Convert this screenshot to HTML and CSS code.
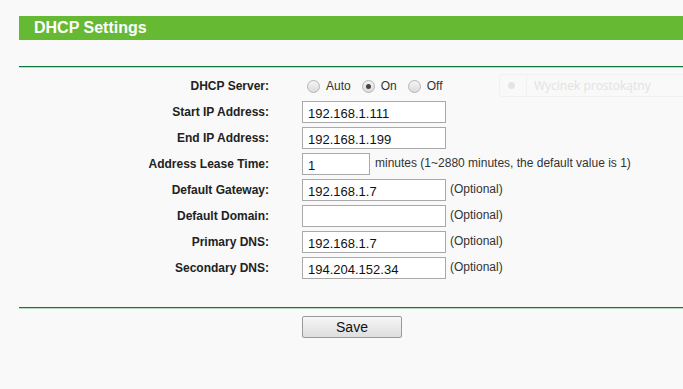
FILE: index.html
```html
<!DOCTYPE html>
<html lang="en">
<head>
    <meta charset="UTF-8">
    <title>DHCP Settings</title>
    <link rel="stylesheet" href="styles.css">
</head>
<body>
    <div class="page">
        <div class="title-bar">DHCP Settings</div>
        <div class="rule"></div>

        <div class="form">
            <div class="label">DHCP Server:</div>
            <div class="field radios">
                <label><input type="radio" name="dhcp" class="radio"> Auto</label>
                <label><input type="radio" name="dhcp" class="radio" checked> On</label>
                <label><input type="radio" name="dhcp" class="radio"> Off</label>
            </div>

            <div class="label">Start IP Address:</div>
            <div class="field"><input type="text" class="text-input" value="192.168.1.111"></div>

            <div class="label">End IP Address:</div>
            <div class="field"><input type="text" class="text-input" value="192.168.1.199"></div>

            <div class="label">Address Lease Time:</div>
            <div class="field"><input type="text" class="text-input short" value="1"><span class="hint">minutes (1~2880 minutes, the default value is 1)</span></div>

            <div class="label">Default Gateway:</div>
            <div class="field"><input type="text" class="text-input" value="192.168.1.7"><span class="hint tight">(Optional)</span></div>

            <div class="label">Default Domain:</div>
            <div class="field"><input type="text" class="text-input" value=""><span class="hint tight">(Optional)</span></div>

            <div class="label">Primary DNS:</div>
            <div class="field"><input type="text" class="text-input" value="192.168.1.7"><span class="hint tight">(Optional)</span></div>

            <div class="label">Secondary DNS:</div>
            <div class="field"><input type="text" class="text-input" value="194.204.152.34"><span class="hint tight">(Optional)</span></div>
        </div>

        <div class="rule bottom"></div>

        <div class="actions">
            <button class="save-btn">Save</button>
        </div>
    </div>

    <!-- faint snipping tool tooltip left over on the screen -->
    <div class="ghost-tip">
        <span class="ghost-dot"></span>
        <span class="ghost-text">Wycinek prostokątny</span>
    </div>
</body>
</html>
```

FILE: styles.css
```css
* {
    margin: 0;
    padding: 0;
    box-sizing: border-box;
}

body {
    background-color: #f9f9f9;
    color: #222;
    font-family: Arial, 'Liberation Sans', sans-serif;
    font-size: 12px;
    min-height: 100vh;
    overflow: hidden;
}

.page {
    padding: 16px 0 0 19px;
}

.title-bar {
    height: 24px;
    line-height: 24px;
    background-color: #66b933;
    color: #fff;
    font-size: 16px;
    font-weight: bold;
    padding-left: 15px;
}

.rule {
    margin-top: 26px;
    border-top: 1px solid #0b7a3b;
    border-bottom: 1px solid #b9dcc3;
}

.rule.bottom {
    margin-top: 28px;
}

.form {
    display: grid;
    grid-template-columns: 250px 1fr;
    column-gap: 33px;
    row-gap: 4px;
    margin-top: 7px;
}

.label {
    height: 22px;
    line-height: 22px;
    text-align: right;
    font-weight: bold;
    color: #222;
}

.field {
    height: 22px;
    display: flex;
    align-items: center;
}

.radios label {
    display: flex;
    align-items: center;
    color: #333;
    margin-right: 6px;
}

.radio {
    appearance: none;
    width: 13px;
    height: 13px;
    border: 1px solid #b5b5b5;
    border-radius: 50%;
    background: linear-gradient(#f4f4f4, #dcdcdc);
    margin: 0 6px 0 5px;
    display: inline-flex;
    align-items: center;
    justify-content: center;
}

.radio:checked::after {
    content: "";
    width: 5px;
    height: 5px;
    border-radius: 50%;
    background-color: #444;
}

.text-input {
    width: 144px;
    height: 22px;
    border: 1px solid #a9a9a9;
    background-color: #fff;
    font-family: inherit;
    font-size: 13px;
    color: #111;
    padding: 2px 5px 0;
    outline: none;
}

.text-input.short {
    width: 68px;
}

.hint {
    margin-left: 5px;
    color: #333;
    margin-top: -3px;
}

.hint.tight {
    margin-left: 4px;
}

.actions {
    padding-left: 283px;
    margin-top: 7px;
}

.save-btn {
    width: 100px;
    height: 22px;
    border: 1px solid #999;
    border-radius: 2px;
    background: linear-gradient(#f6f6f6, #dedede);
    font-family: inherit;
    font-size: 14px;
    color: #111;
}

.ghost-tip {
    position: absolute;
    left: 499px;
    top: 74px;
    width: 190px;
    height: 23px;
    border: 1px solid #f1f1f1;
    border-radius: 3px;
    display: flex;
    align-items: center;
}

.ghost-dot {
    width: 7px;
    height: 7px;
    border-radius: 50%;
    background-color: #e4e4e4;
    margin: 0 11px 0 8px;
}

.ghost-text {
    font-family: 'Open Sans', 'Noto Sans', sans-serif;
    font-size: 12px;
    color: #e2e2e2;
    border-left: 1px solid #f1f1f1;
    padding-left: 7px;
    line-height: 21px;
}
```
